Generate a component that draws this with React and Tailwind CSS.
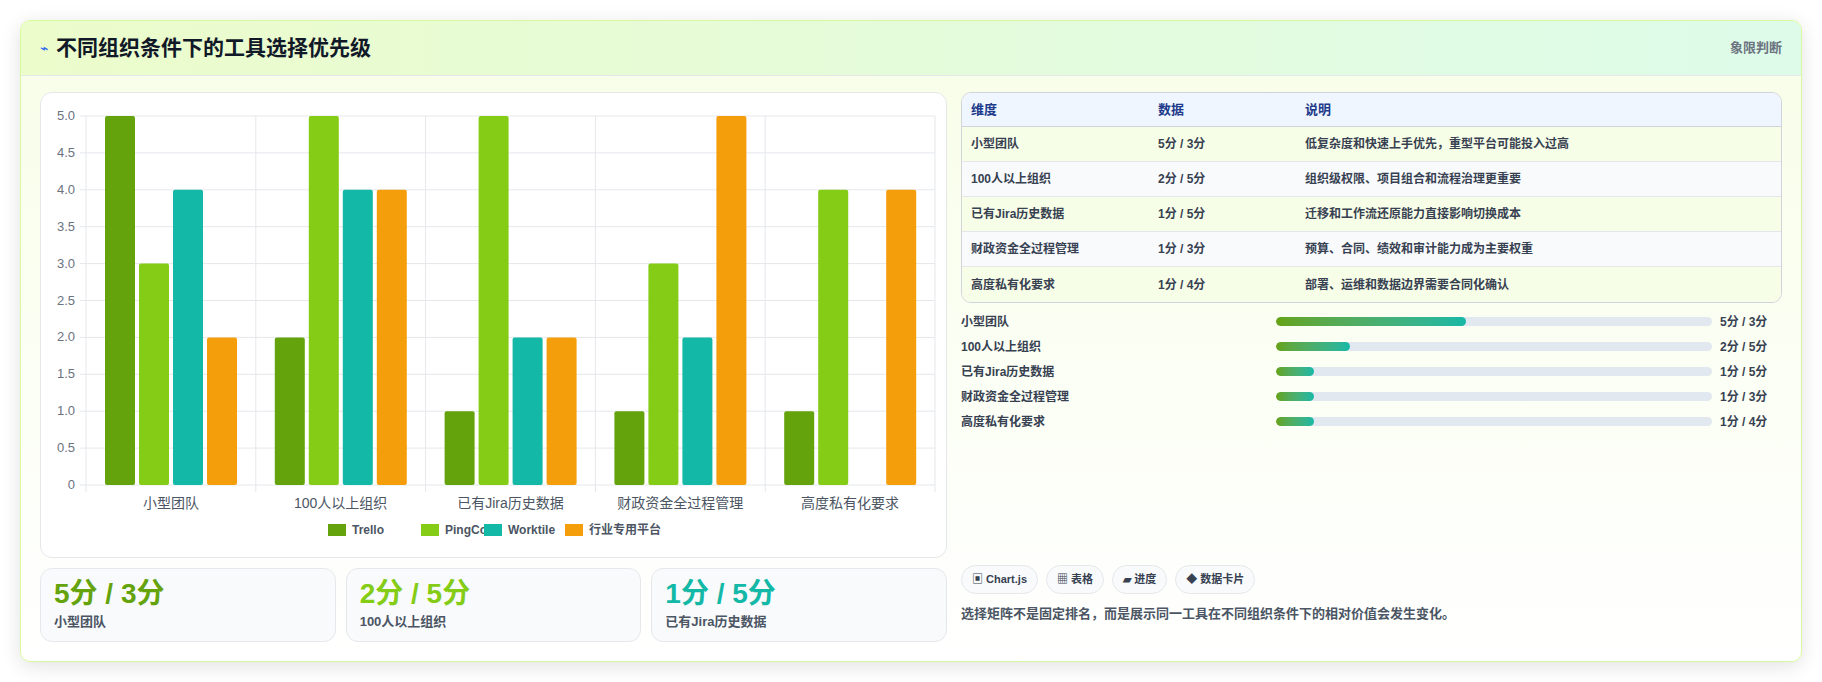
const F = '"Liberation Sans","Noto Sans CJK SC",sans-serif';
const cats = ['小型团队','100人以上组织','已有Jira历史数据','财政资金全过程管理','高度私有化要求'];
const data = [[5,3,4,2],[2,5,4,4],[1,5,2,2],[1,3,2,5],[1,4,0,4]];
const cols = ['#65a30d','#84cc16','#14b8a6','#f59e0b'];
const names = ['Trello','PingCode','Worktile','行业专用平台'];
const rows = [
  ['小型团队','5分 / 3分','低复杂度和快速上手优先，重型平台可能投入过高',43.5],
  ['100人以上组织','2分 / 5分','组织级权限、项目组合和流程治理更重要',17],
  ['已有Jira历史数据','1分 / 5分','迁移和工作流还原能力直接影响切换成本',8.7],
  ['财政资金全过程管理','1分 / 3分','预算、合同、绩效和审计能力成为主要权重',8.7],
  ['高度私有化要求','1分 / 4分','部署、运维和数据边界需要合同化确认',8.7],
];
function Chart(){
  const L=45,R=894,T=23,B=392,cw=(R-L)/5;
  const y=v=>B-(B-T)*v/5;
  return (
    <svg width="905" height="464" style={{fontFamily:F}}>
      {[0,0.5,1,1.5,2,2.5,3,3.5,4,4.5,5].map(v=>(
        <g key={v}>
          <line x1={L-6} x2={R} y1={y(v)} y2={y(v)} stroke="#e5e7eb"/>
          <text x={34} y={y(v)+4} textAnchor="end" fontSize="13" fill="#6b7280">{v===0?'0':v.toFixed(1)}</text>
        </g>
      ))}
      {[0,1,2,3,4,5].map(i=><line key={i} x1={L+i*cw} x2={L+i*cw} y1={T} y2={B+7} stroke="#e5e7eb"/>)}
      {data.map((d,i)=>d.map((v,j)=>v>0&&(
        <rect key={i+'-'+j} x={L+i*cw+19+j*34} y={y(v)} width="30" height={B-y(v)} rx="2" fill={cols[j]}/>
      )))}
      {cats.map((c,i)=><text key={c} x={L+i*cw+cw/2} y={415} textAnchor="middle" fontSize="14" fill="#4b5563">{c}</text>)}
      {(() => {const xs=[287,380,443,524];return names.map((n,j)=>(
        <g key={n}><rect x={xs[j]} y={431} width="18" height="12" fill={cols[j]}/>
        <text x={xs[j]+24} y={441} fontSize="12" fontWeight="bold" fill="#4b5563">{n}</text></g>));})()}
    </svg>
  );
}
export default function App(){
  return (
    <div className="w-[1822px] h-[682px] bg-white pt-[20px] px-[20px]" style={{fontFamily:F}}>
      <div className="w-[1782px] h-[642px] rounded-[10px] border border-[#d9f99d] shadow-[0_4px_20px_rgba(0,0,0,0.12)] overflow-hidden bg-gradient-to-b from-[#f7fee7] to-white flex flex-col">
        <div className="h-[55px] shrink-0 flex items-center justify-between px-[19px] bg-gradient-to-r from-[#ecfccb] to-[#ddfbe9] border-b border-[#e5e7eb]">
          <div className="flex items-center gap-[8px]"><span className="text-[#2563eb] text-[14px]">⌁</span><span className="text-[21px] font-bold text-[#111827]">不同组织条件下的工具选择优先级</span></div>
          <span className="text-[13px] font-bold text-[#6b7280]">象限判断</span>
        </div>
        <div className="flex gap-[14px] px-[19px] pt-[16px]">
          <div className="w-[907px] flex flex-col gap-[10px]">
            <div className="h-[466px] rounded-[12px] border border-[#e5e7eb] bg-white pt-[0px]"><Chart/></div>
            <div className="grid grid-cols-3 gap-[10px]">
              {[[0,'5分 / 3分','小型团队','#65a30d'],[1,'2分 / 5分','100人以上组织','#84cc16'],[2,'1分 / 5分','已有Jira历史数据','#14b8a6']].map(([k,v,l,c])=>(
                <div key={k} className="h-[74px] rounded-[12px] border border-[#e5e7eb] bg-[#f8fafc] px-[13px] pt-[7px]">
                  <div className="text-[28px] font-bold leading-[36px]" style={{color:c}}>{v}</div>
                  <div className="text-[13px] font-bold text-[#4b5563]">{l}</div>
                </div>))}
            </div>
          </div>
          <div className="flex-1 flex flex-col">
            <div className="rounded-[10px] border border-[#d1d5db] overflow-hidden">
              <div className="h-[34px] flex items-center bg-[#eff6ff] border-b border-[#d1d5db] text-[13px] font-bold text-[#1e3a8a]">
                <div className="w-[196px] pl-[9px]">维度</div><div className="w-[147px]">数据</div><div>说明</div>
              </div>
              {rows.map((r,i)=>(
                <div key={i} className={"h-[35px] flex items-center text-[12px] font-bold text-[#374151] "+(i<4?"border-b border-[#e5e7eb] ":"")+(i%2===0?"bg-[#f7fee7]":"bg-[#f8fafc]")}>
                  <div className="w-[196px] pl-[9px]">{r[0]}</div><div className="w-[147px]">{r[1]}</div><div>{r[2]}</div>
                </div>))}
            </div>
            <div className="flex flex-col gap-[6px] mt-[9px]">
              {rows.map((r,i)=>(
                <div key={i} className="h-[19px] flex items-center text-[12px] font-bold text-[#374151]">
                  <div className="w-[315px]">{r[0]}</div>
                  <div className="w-[436px] h-[9px] rounded-full bg-[#e2e8f0] overflow-hidden"><div className="h-full rounded-full bg-gradient-to-r from-[#65a30d] to-[#14b8a6]" style={{width:r[3]+'%'}}/></div>
                  <div className="ml-[8px]">{r[1]}</div>
                </div>))}
            </div>
            <div className="flex gap-[8px] mt-[134px]">
              {['▣ Chart.js','▦ 表格','▰ 进度','◆ 数据卡片'].map(t=>(
                <span key={t} className="h-[29px] px-[10px] flex items-center rounded-full border border-[#e5e7eb] bg-[#f8fafc] text-[11px] font-bold text-[#374151]">{t}</span>))}
            </div>
            <div className="mt-[10px] text-[13px] font-bold text-[#4b5563]">选择矩阵不是固定排名，而是展示同一工具在不同组织条件下的相对价值会发生变化。</div>
          </div>
        </div>
      </div>
    </div>
  );
}
